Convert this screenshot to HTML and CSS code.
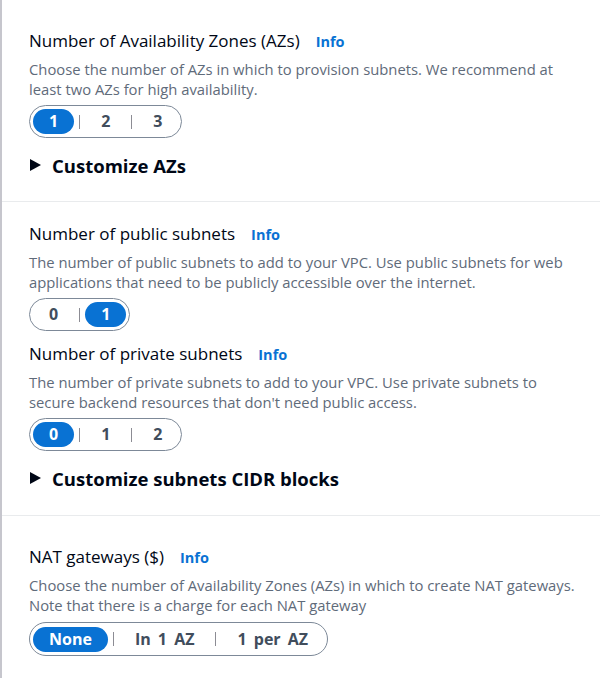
FILE: index.html
```html
<!DOCTYPE html>
<html lang="en">
<head>
<meta charset="utf-8">
<title>VPC settings</title>
<link rel="stylesheet" href="styles.css">
</head>
<body>
<div class="panel">
  <section class="sec sec-1">
    <div class="field">
      <div class="label-row"><span class="label">Number of Availability Zones (AZs)</span><a class="info">Info</a></div>
      <p class="desc">Choose the number of AZs in which to provision subnets. We recommend at least two AZs for high availability.</p>
      <div class="seg">
        <button class="opt on">1</button><span class="div"></span>
        <button class="opt">2</button><span class="div"></span>
        <button class="opt">3</button>
      </div>
    </div>
    <div class="expander"><svg class="caret" viewBox="0 0 11 12" width="11" height="12"><path d="M0 0 L11 6 L0 12 Z" fill="#000716"/></svg><span>Customize AZs</span></div>
  </section>
  <section class="sec sec-2">
    <div class="field">
      <div class="label-row"><span class="label">Number of public subnets</span><a class="info">Info</a></div>
      <p class="desc">The number of public subnets to add to your VPC. Use public subnets for web applications that need to be publicly accessible over the internet.</p>
      <div class="seg">
        <button class="opt">0</button><span class="div"></span>
        <button class="opt on">1</button>
      </div>
    </div>
    <div class="field field-2">
      <div class="label-row"><span class="label">Number of private subnets</span><a class="info">Info</a></div>
      <p class="desc">The number of private subnets to add to your VPC. Use private subnets to secure backend resources that don't need public access.</p>
      <div class="seg">
        <button class="opt on">0</button><span class="div"></span>
        <button class="opt">1</button><span class="div"></span>
        <button class="opt">2</button>
      </div>
    </div>
    <div class="expander"><svg class="caret" viewBox="0 0 11 12" width="11" height="12"><path d="M0 0 L11 6 L0 12 Z" fill="#000716"/></svg><span>Customize subnets CIDR blocks</span></div>
  </section>
  <section class="sec sec-3">
    <div class="field">
      <div class="label-row"><span class="label">NAT gateways ($)</span><a class="info">Info</a></div>
      <p class="desc">Choose the number of Availability Zones (AZs) in which to create NAT gateways. Note that there is a charge for each NAT gateway</p>
      <div class="seg seg-tall">
        <button class="opt on">None</button><span class="div"></span>
        <button class="opt">In 1 AZ</button><span class="div"></span>
        <button class="opt">1 per AZ</button>
      </div>
    </div>
  </section>
</div>
</body>
</html>
```
FILE: styles.css
```css
* { box-sizing: border-box; }
html, body { margin: 0; padding: 0; background: #ffffff; }
body {
  font-family: "Open Sans", "Noto Sans", Arial, sans-serif;
  color: #000716;
  width: 600px;
  height: 678px;
  overflow: hidden;
}
.panel {
  border-left: 2px solid #c6c6cd;
  min-height: 678px;
}
.sec {
  padding: 0 20px 23px 27px;
  border-bottom: 1px solid #e9ebed;
}
.sec-1 { padding-top: 30px; }
.sec-2 { padding-top: 21px; padding-bottom: 24px; }
.sec-3 { padding-top: 30px; border-bottom: none; }
.label-row {
  display: flex;
  align-items: baseline;
  gap: 16px;
  height: 22px;
  line-height: 22px;
}
.label {
  font-size: 17px;
  font-weight: 400;
  color: #000716;
}
.info {
  font-size: 14.5px;
  font-weight: 700;
  color: #0972d3;
  cursor: pointer;
}
.desc {
  margin: 7px 0 0;
  font-size: 14.8px;
  line-height: 20px;
  color: #5f6b7a;
}
.seg {
  display: inline-flex;
  align-items: center;
  margin-top: 6px;
  padding: 3px;
  border: 1px solid #7d8998;
  border-radius: 20px;
}
.seg-tall { margin-top: 7px; padding: 3.5px 3px; }
.opt {
  height: 25px;
  min-width: 41px;
  padding: 0 16px;
  border: none;
  border-radius: 13px;
  background: transparent;
  font-family: inherit;
  font-size: 16px;
  font-weight: 700;
  color: #414d5c;
  line-height: 25px;
  word-spacing: 3px;
}
.opt.on {
  background: #0972d3;
  color: #ffffff;
}
.div {
  width: 1px;
  height: 14px;
  margin: 0 5px;
  background: #8c8c94;
}
.field-2 { margin-top: 12px; }
.expander {
  display: flex;
  align-items: center;
  gap: 11px;
  margin-top: 14px;
  padding-left: 1px;
  height: 26px;
  font-size: 18.5px;
  font-weight: 700;
  color: #000716;
}
.caret { flex: none; }
```
